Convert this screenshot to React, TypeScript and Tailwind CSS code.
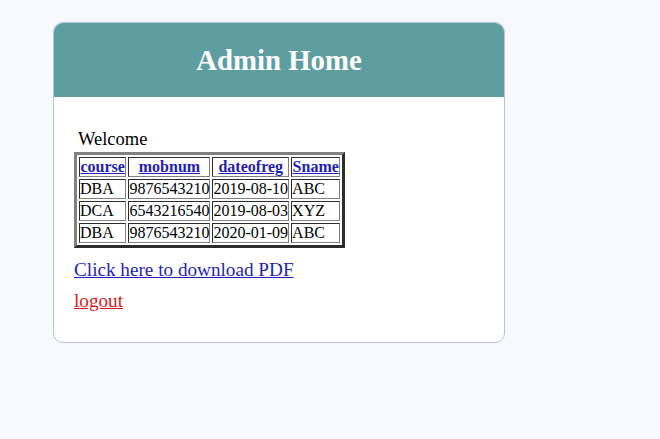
const rows = [
  ['DBA', '9876543210', '2019-08-10', 'ABC'],
  ['DCA', '6543216540', '2019-08-03', 'XYZ'],
  ['DBA', '9876543210', '2020-01-09', 'ABC'],
]

const heads = ['course', 'mobnum', 'dateofreg', 'Sname']

export default function App() {
  return (
    <div className="min-h-screen bg-[#f8f8ff] pt-[22px] font-['Liberation_Serif',serif] text-black">
      <div className="ml-[53px] w-[452px] overflow-hidden rounded-[10px] border border-[#b0c4de] bg-white">
        <header className="flex h-[74px] items-center justify-center bg-[#5f9ea0]">
          <h1 className="text-[28.8px] font-bold leading-none text-white">Admin Home</h1>
        </header>

        <main className="px-5 pb-[30px] pt-[32px]">
          <div className="pl-1 text-[18.5px] leading-[21px]">Welcome</div>

          <table className="mt-[2px] border-separate border-spacing-[2px] border-[3px] border-[#808080] text-[16px] leading-[18px] [border-style:outset]">
            <thead>
              <tr>
                {heads.map((h) => (
                  <th key={h} className="border border-[#808080] px-[0.5px] py-0 text-center font-bold [border-style:inset]">
                    <a href="#" className="text-[#1f1fb4] underline">
                      {h}
                    </a>
                  </th>
                ))}
              </tr>
            </thead>
            <tbody>
              {rows.map((r, i) => (
                <tr key={i}>
                  {r.map((c, j) => (
                    <td key={j} className="border border-[#808080] px-0 py-0 [border-style:inset]">
                      {c}
                    </td>
                  ))}
                </tr>
              ))}
            </tbody>
          </table>

          <div className="mt-[11px] text-[19.2px] leading-[22px]">
            <a href="#" className="text-[#1f1fb4] underline">
              Click here to download PDF
            </a>
          </div>
          <div className="mt-[9px] text-[19.2px] leading-[22px]">
            <a href="#" className="text-[#d61a1a] underline">
              logout
            </a>
          </div>
        </main>
      </div>
    </div>
  )
}
